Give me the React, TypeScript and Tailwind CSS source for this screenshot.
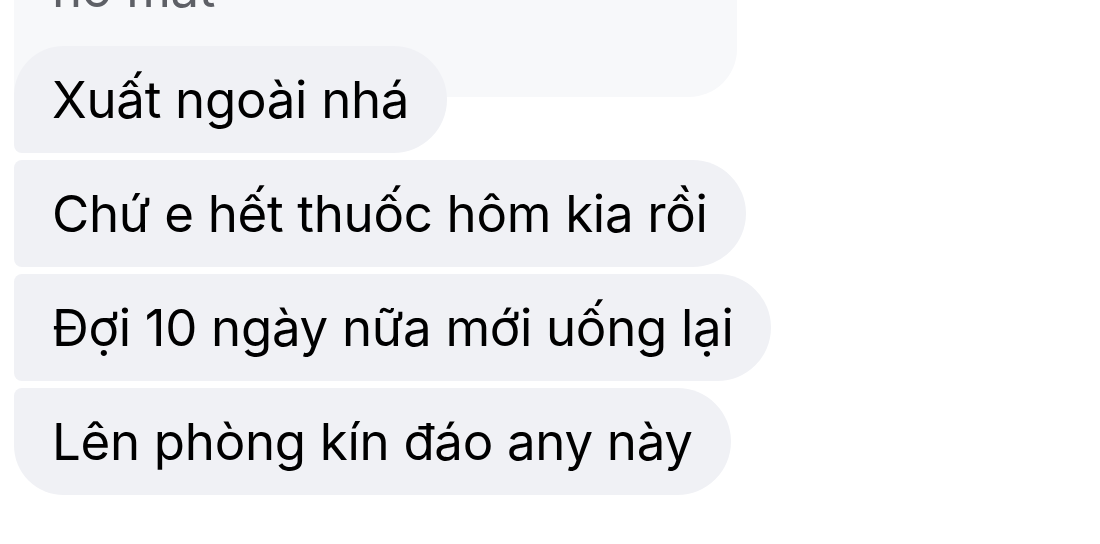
import React from "react";

const messages = [
  { text: "Xuất ngoài nhá", corners: "rounded-tl-[50px] rounded-bl-[8px]" },
  { text: "Chứ e hết thuốc hôm kia rồi", corners: "rounded-l-[8px]" },
  { text: "Đợi 10 ngày nữa mới uống lại", corners: "rounded-l-[8px]" },
  { text: "Lên phòng kín đáo any này", corners: "rounded-tl-[8px] rounded-bl-[50px]" },
];

function Bubble({ text, corners }: { text: string; corners: string }) {
  return (
    <div
      className={
        "bg-[#f0f1f5] text-black text-[51px] leading-[107px] tracking-[-0.3px] px-[38px] whitespace-nowrap rounded-r-[54px] " +
        corners
      }
    >
      {text}
    </div>
  );
}

export default function App() {
  return (
    <div
      className="h-[544px] w-[1100px] bg-white overflow-hidden"
      style={{ fontFamily: "Inter, 'Noto Sans', sans-serif" }}
    >
      <div className="flex flex-col items-start pl-[14px]">
        {/* quoted message the first bubble replies to */}
        <div className="w-[723px] -mt-[65px] pb-[55px] pl-[38px] bg-[#f7f8fa] text-[#5e6066] text-[51px] leading-[107px] tracking-[-0.3px] rounded-bl-[8px] rounded-br-[48px]">
          nó mất
        </div>
        <div className="-mt-[51px] flex flex-col items-start gap-[7px]">
          {messages.map((m, i) => (
            <Bubble key={i} text={m.text} corners={m.corners} />
          ))}
        </div>
      </div>
    </div>
  );
}
